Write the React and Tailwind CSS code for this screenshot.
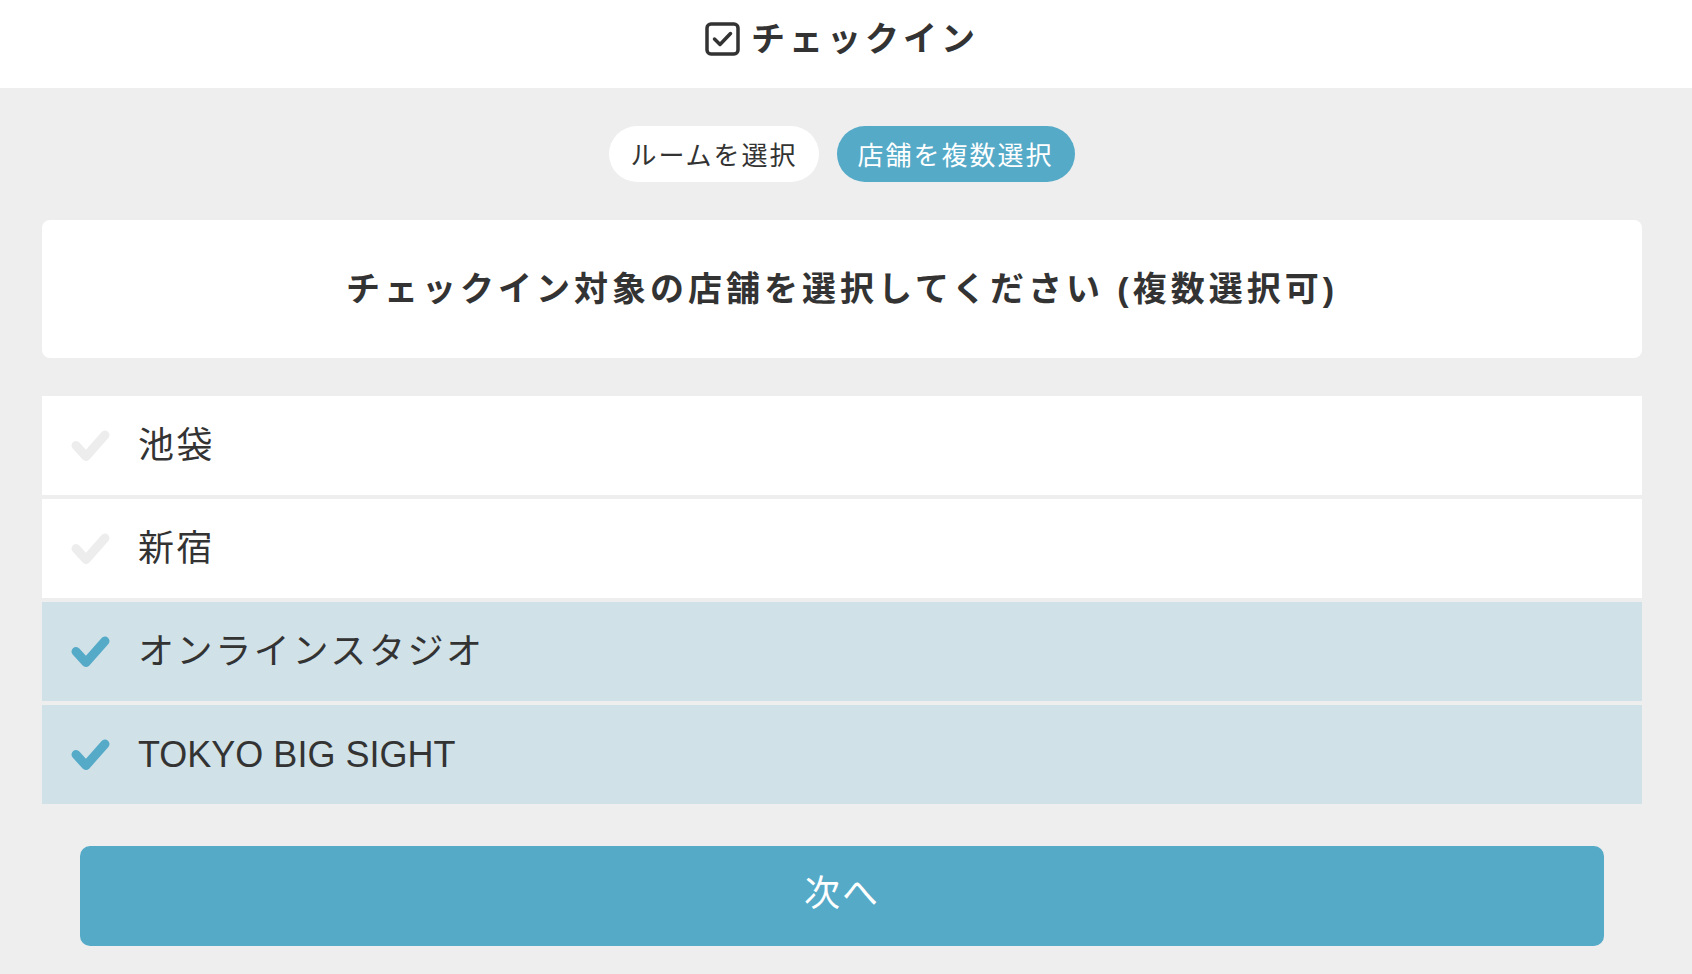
import React, { useState } from "react";

const JP = { fontFamily: '"Liberation Sans", "Noto Sans CJK JP", sans-serif' };

function CheckSquare() {
  return (
    <svg width="35" height="34" viewBox="0 0 35 34" className="shrink-0">
      <rect x="2" y="2" width="31" height="30" rx="4" fill="none" stroke="#333" strokeWidth="3.5" />
      <polyline points="9.5,17 15,22.5 25.5,11.5" fill="none" stroke="#333" strokeWidth="3.5" strokeLinecap="round" strokeLinejoin="round" />
    </svg>
  );
}

function Check({ on }) {
  return (
    <svg width="40" height="32" viewBox="0 0 40 32" className="shrink-0">
      <polyline
        points="6,15.5 16,26.5 35,5"
        fill="none"
        stroke={on ? "#55aac8" : "#ededed"}
        strokeWidth="9"
        strokeLinecap="round"
        strokeLinejoin="round"
      />
    </svg>
  );
}

const stores = [
  { name: "池袋", on: false, cjk: true },
  { name: "新宿", on: false, cjk: true },
  { name: "オンラインスタジオ", on: true, cjk: true },
  { name: "TOKYO BIG SIGHT", on: true, cjk: false },
];

export default function App() {
  const [items, setItems] = useState(stores);
  return (
    <div className="min-h-[974px] w-full bg-[#eeeeee] text-[#333333]" style={JP}>
      <header className="h-[88px] bg-white pl-[42px] pr-[50px] flex items-center justify-center">
        <div className="flex items-center gap-[11px] pb-[10px]">
          <CheckSquare />
          <span className="text-[34px] font-bold tracking-[4px] leading-none">チェックイン</span>
        </div>
      </header>

      <main className="pl-[42px] pr-[50px] pt-[38px] pb-[28px] flex flex-col">
        <div className="flex justify-center gap-[18px]">
          <button className="h-[56px] px-[21px] pt-[3px] rounded-full bg-white text-[26px] tracking-[2px] leading-none text-[#333]">
            ルームを選択
          </button>
          <button className="h-[56px] px-[21px] pt-[3px] rounded-full bg-[#55aac8] text-[26px] tracking-[2px] leading-none text-white">
            店舗を複数選択
          </button>
        </div>

        <div className="mt-[38px] h-[138px] rounded-[8px] bg-white flex items-center justify-center">
          <h2 className="text-[34px] font-bold tracking-[4px] leading-none">
            チェックイン対象の店舗を選択してください (複数選択可)
          </h2>
        </div>

        <ul className="mt-[38px] flex flex-col gap-1">
          {items.map((s, i) => (
            <li
              key={s.name}
              onClick={() => setItems(items.map((x, j) => (j === i ? { ...x, on: !x.on } : x)))}
              className={
                "h-[99px] flex items-center pl-[28px] cursor-pointer " +
                (s.on ? "bg-[#d0e1e8]" : "bg-white")
              }
            >
              <Check on={s.on} />
              <span
                className={
                  "ml-[28px] text-[36px] leading-none " + (s.cjk ? "tracking-[2.6px]" : "tracking-normal")
                }
              >
                {s.name}
              </span>
            </li>
          ))}
        </ul>

        <div className="mt-[42px] mx-[38px]">
          <button className="w-full h-[100px] rounded-[10px] bg-[#55aac8] text-white text-[36px] tracking-[2px] leading-none pb-[4px]">
            次へ
          </button>
        </div>
      </main>
    </div>
  );
}
